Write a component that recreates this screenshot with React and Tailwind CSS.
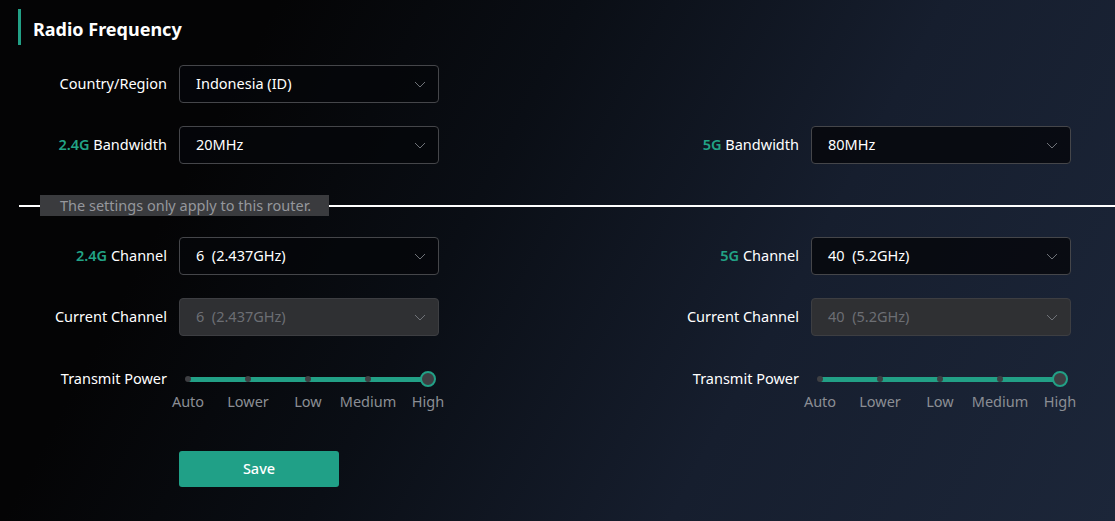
import { useState } from 'react';

const FONT = { fontFamily: '"Noto Sans", "Open Sans", Arial, sans-serif' };
const LEVELS = ['Auto', 'Lower', 'Low', 'Medium', 'High'];

function Chevron({ className = '' }) {
  return (
    <svg width="12" height="7" viewBox="0 0 12 7" className={className}>
      <polyline points="1,1 6,6 11,1" fill="none" stroke="currentColor" strokeWidth="1" />
    </svg>
  );
}

function Select({ value, disabled }) {
  return (
    <div
      className={`flex items-center justify-between w-[260px] h-[38px] pl-4 pr-[12px] rounded-[4px] border ${
        disabled
          ? 'bg-[#2f3033] border-[#3d3e42] text-[#6c6e73]'
          : 'bg-[#05060a]/80 border-[#45464a] text-white'
      }`}
    >
      <span className="text-[14.5px] whitespace-pre">{value}</span>
      <Chevron className="text-[#6f7278]" />
    </div>
  );
}

function Label({ band, text }) {
  return (
    <div className="w-[148px] text-right text-[14.5px] text-white shrink-0">
      {band && <span className="text-[#22a386] font-semibold">{band} </span>}
      {text}
    </div>
  );
}

function Field({ band, text, children }) {
  return (
    <div className="flex items-center gap-3">
      <Label band={band} text={text} />
      {children}
    </div>
  );
}

function PowerSlider() {
  const [level, setLevel] = useState(4);
  return (
    <div className="w-[260px]">
      <div className="relative h-[16px]">
        <div className="absolute left-[9px] top-[5.5px] w-[240px] h-[5px] bg-[#22a086] rounded-full" />
        {LEVELS.map((l, i) =>
          i === level ? (
            <button
              key={l}
              onClick={() => setLevel(i)}
              className="absolute top-0 w-[16px] h-[16px] rounded-full bg-[#3e3f43] border-2 border-[#22a086]"
              style={{ left: 9 + i * 60 - 8 }}
            />
          ) : (
            <button
              key={l}
              onClick={() => setLevel(i)}
              className="absolute top-[5px] w-[6px] h-[6px] rounded-full bg-[#3e3f43]"
              style={{ left: 9 + i * 60 - 3 }}
            />
          )
        )}
      </div>
      <div className="flex ml-[-21px] mt-[4px]">
        {LEVELS.map((l) => (
          <div key={l} className="w-[60px] shrink-0 text-center text-[14.5px] text-[#8b8e94]">
            {l}
          </div>
        ))}
      </div>
    </div>
  );
}

function PowerField() {
  return (
    <div className="flex items-start gap-3">
      <div className="w-[148px] text-right text-[14.5px] text-white shrink-0 leading-[16px] mt-[-1px]">
        Transmit Power
      </div>
      <PowerSlider />
    </div>
  );
}

export default function App() {
  return (
    <div
      className="w-[1115px] h-[521px] overflow-hidden bg-[linear-gradient(118deg,#040405_20%,#0a0e15_42%,#161e2e_68%,#1c2639_100%)] text-white"
      style={FONT}
    >
      <div className="ml-[18px] mt-[9px] h-[36px] border-l-[3px] border-[#22a086] pl-[12px] pt-[4px] flex items-center">
        <h1 className="text-[18px] font-bold">Radio Frequency</h1>
      </div>

      <div className="pl-[19px] mt-[20px] grid grid-cols-[632px_1fr] gap-y-[23px]">
        <Field text="Country/Region">
          <Select value="Indonesia (ID)" />
        </Field>
        <div />
        <Field band="2.4G" text="Bandwidth">
          <Select value="20MHz" />
        </Field>
        <Field band="5G" text="Bandwidth">
          <Select value="80MHz" />
        </Field>
      </div>

      <div className="mt-[31px] flex items-center pl-[19px]">
        <div className="w-[21px] h-[2px] bg-white" />
        <div className="w-[289px] h-[21px] bg-[#3a3b3e] text-[14.5px] text-[#95979c] pl-[20px] flex items-center">
          The settings only apply to this router.
        </div>
        <div className="flex-1 h-[2px] bg-white" />
      </div>

      <div className="pl-[19px] mt-[21px] grid grid-cols-[632px_1fr] gap-y-[23px]">
        <Field band="2.4G" text="Channel">
          <Select value="6  (2.437GHz)" />
        </Field>
        <Field band="5G" text="Channel">
          <Select value="40  (5.2GHz)" />
        </Field>
        <Field text="Current Channel">
          <Select value="6  (2.437GHz)" disabled />
        </Field>
        <Field text="Current Channel">
          <Select value="40  (5.2GHz)" disabled />
        </Field>
        <div className="mt-[12px]">
          <PowerField />
        </div>
        <div className="mt-[12px]">
          <PowerField />
        </div>
      </div>

      <div className="ml-[179px] mt-[38px]">
        <button className="w-[160px] h-[36px] rounded-[3px] bg-[#20a087] text-white text-[14.5px] font-medium">
          Save
        </button>
      </div>
    </div>
  );
}
